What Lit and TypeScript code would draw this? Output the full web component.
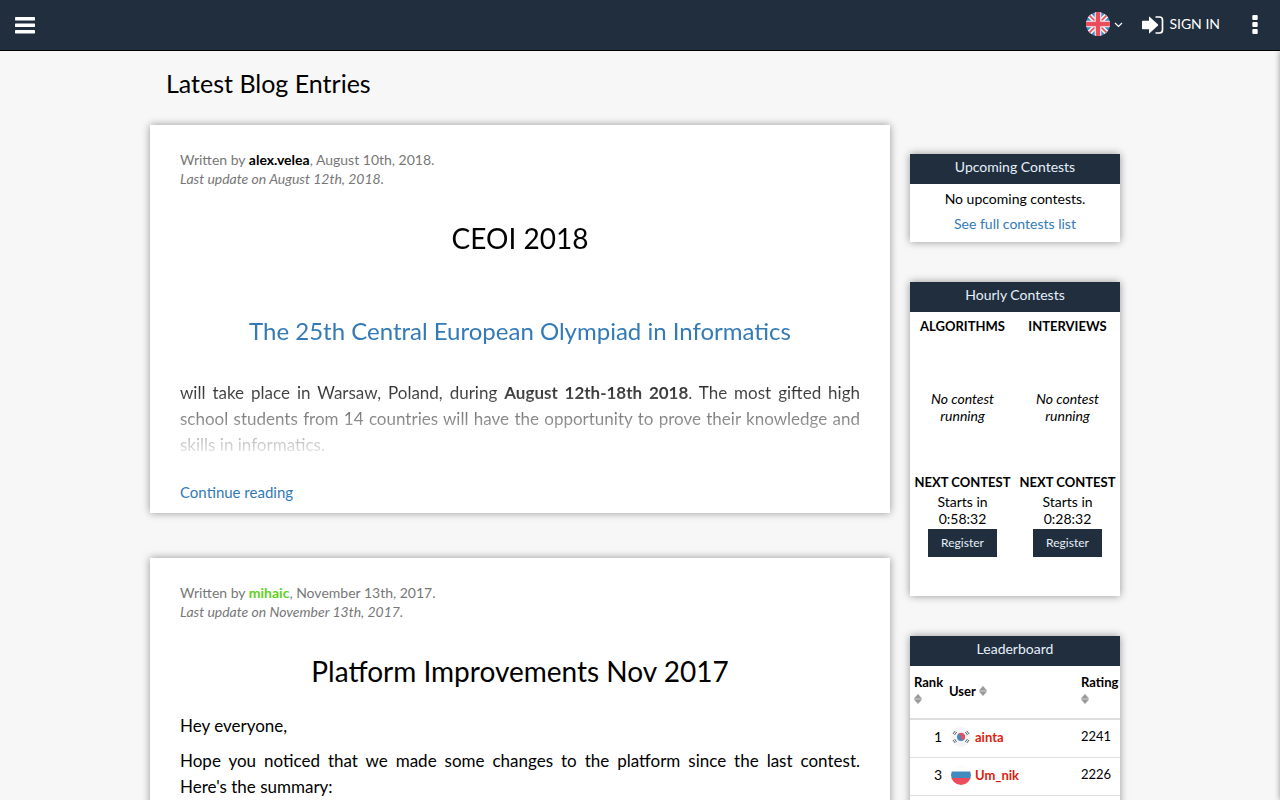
import { LitElement, html, css, svg } from "lit";
import { customElement } from "lit/decorators.js";

const ukFlag = svg`
  <svg class="flag-lg" viewBox="0 0 24 24" aria-hidden="true">
    <clipPath id="uk"><circle cx="12" cy="12" r="12"/></clipPath>
    <g clip-path="url(#uk)">
      <rect width="24" height="24" fill="#428bc1"/>
      <path d="M0 0L24 24M24 0L0 24" stroke="#f5f5f5" stroke-width="5"/>
      <path d="M0 0L24 24M24 0L0 24" stroke="#e8516a" stroke-width="1.8"/>
      <path d="M12 0V24M0 12H24" stroke="#f5f5f5" stroke-width="6.6"/>
      <path d="M12 0V24M0 12H24" stroke="#ed4c5c" stroke-width="4.4"/>
    </g>
  </svg>`;

const krFlag = svg`
  <svg class="flag" viewBox="0 0 20 20" aria-hidden="true">
    <circle cx="10" cy="10" r="10" fill="#f5f5f7"/>
    <circle cx="10" cy="10" r="4" fill="#428bc1"/>
    <path d="M6.300 8.500A4 4 0 1 1 13.700 11.500A2 2 0 0 1 10 10A2 2 0 0 0 6.300 8.500z" fill="#ed4c5c"/>
    <g stroke="#5f656b" stroke-width="1" fill="none">
      <path d="M2 7L4.200 4M3.500 8L5.700 5M15.800 4L18 7M14.300 5L16.500 8M2 13L4.200 16M3.500 12L5.700 15M15.800 16L18 13M14.300 15L16.500 12"/>
    </g>
  </svg>`;

const ruFlag = svg`
  <svg class="flag" viewBox="0 0 20 20" aria-hidden="true">
    <clipPath id="ru"><circle cx="10" cy="10" r="10"/></clipPath>
    <g clip-path="url(#ru)">
      <rect width="20" height="7" fill="#fcfcfc"/>
      <rect y="6.500" width="20" height="7" fill="#428bc1"/>
      <rect y="13" width="20" height="7" fill="#ed4c5c"/>
    </g>
  </svg>`;

const sortIcon = svg`
  <svg class="sort" viewBox="0 0 8 10" aria-hidden="true">
    <path d="M.3 4.400L4 .3 7.700 4.400zM.3 5.600H7.700L4 9.700z" fill="#999" stroke="#999" stroke-width=".5"/>
  </svg>`;

interface Player { rank: number; name: string; rating: number; flag: unknown; }
interface Contest { kind: string; countdown: string; }

const players: Player[] = [
  { rank: 1, name: "ainta", rating: 2241, flag: krFlag },
  { rank: 3, name: "Um_nik", rating: 2226, flag: ruFlag },
];

const contests: Contest[] = [
  { kind: "ALGORITHMS", countdown: "0:58:32" },
  { kind: "INTERVIEWS", countdown: "0:28:32" },
];

@customElement("app-root")
export class AppRoot extends LitElement {
  static styles = css`
    :host {
      display: block;
      min-height: 100vh;
      background: #f7f7f7;
      color: #000;
      font: 14px/20px Lato, "Liberation Sans", sans-serif;
    }
    * { box-sizing: border-box; }
    h1, h2, h3, h4, p { margin: 0; font-weight: 400; }
    a { color: #337ab7; text-decoration: none; }
    button { font-family: inherit; border: 0; cursor: pointer; }
    svg { display: block; }

    .topbar {
      position: sticky;
      top: 0;
      z-index: 2;
      display: flex;
      align-items: center;
      height: 51px;
      padding: 0 22px 3px 15px;
      background: #202e3e;
      border-bottom: 1px solid #000;
    }
    .icon-btn { background: none; padding: 0; color: #fff; }
    .menu-icon { width: 20px; height: 18px; margin-top: 2px; }
    .actions { display: flex; align-items: center; margin-left: auto; color: #fff; }
    .lang { display: flex; align-items: center; gap: 4px; margin-right: 19px; }
    .flag-lg { width: 24px; height: 24px; }
    .chevron { width: 9px; height: 6px; margin-top: 3px; }
    .signin { display: flex; align-items: center; gap: 5px; color: #fff; margin-right: 32px; }
    .signin-icon { width: 22px; height: 18px; margin-top: 3px; }
    .dots { width: 6px; height: 20px; }

    .drawer {
      position: fixed;
      top: 51px;
      bottom: 0;
      left: 100%;
      width: 250px;
      box-shadow: 0 0 6px rgba(0, 0, 0, 0.4);
    }

    .page { max-width: 980px; margin: 0 auto; padding-right: 10px; }
    .page-title { padding: 16px 16px 26px; font-size: 25px; line-height: 32px; }
    .columns { display: grid; grid-template-columns: minmax(0, 1fr) 210px; gap: 20px; align-items: start; }

    .posts { display: grid; gap: 45px; }
    .card { background: #fff; box-shadow: 0 0 8px rgba(0, 0, 0, 0.4); }
    .post { padding: 25px 30px 10px; }
    .meta { color: #777; line-height: 19px; }
    .author { font-weight: 700; color: #000; }
    .author.green { color: #5fd11c; }
    .post-title { margin: 34px 0 25px; font-size: 28px; line-height: 33px; text-align: center; }
    .post-sub { margin: 62px 0 35px; font-size: 24px; line-height: 28px; text-align: center; }
    .text { font-size: 17px; line-height: 26px; text-align: justify; }
    .text + .text { margin-top: 9px; }
    .excerpt {
      -webkit-mask-image: linear-gradient(#000 calc(100% - 88px), transparent calc(100% + 5px));
      mask-image: linear-gradient(#000 calc(100% - 88px), transparent calc(100% + 5px));
    }
    .more { display: block; width: fit-content; margin-top: 24px; font-size: 15px; line-height: 21px; }

    .side { display: grid; gap: 40px; padding-top: 29px; text-align: center; }
    .side-title { padding: 3px 0 7px; font-size: 14px; line-height: 20px; background: #202e3e; color: #e6f0fa; }
    .upcoming { display: grid; gap: 5px; padding: 5px 0 8px; }
    .hourly { display: grid; grid-template-columns: 1fr 1fr; padding: 4px 0 39px; }
    .label { font-size: 13px; font-weight: 700; line-height: 20px; }
    .status { padding: 54px 20px 48px; font-style: italic; line-height: 17px; }
    .starts { padding: 1px 20px 2px; line-height: 17px; }
    .register { display: block; width: 69px; height: 28px; margin: 0 auto; padding: 0 0 2px; font-size: 12px; background: #202e3e; color: #e6f0fa; }

    .board { width: 100%; border-collapse: collapse; table-layout: fixed; text-align: left; margin-bottom: 40px; }
    .board th { height: 53px; padding: 0 0 2px 4px; border-bottom: 2px solid #ddd; font-size: 13px; line-height: 17px; }
    .board td { height: 38px; padding: 0 0 2px 4px; border-bottom: 1px solid #ddd; }
    .col-rank { width: 35px; }
    .col-rating { width: 43px; }
    .board .num { padding: 0 3px 2px 0; text-align: right; }
    .board .rating { padding-bottom: 5px; font-size: 13px; }
    .sort { display: inline-block; width: 8px; height: 10px; }
    .player { display: flex; align-items: center; gap: 4px; padding-left: 2px; }
    .flag { width: 20px; height: 20px; }
    .handle { color: #dd1c0f; font-size: 13px; font-weight: 700; }
  `;

  private renderContest(c: Contest) {
    return html`
      <section>
        <h4 class="label">${c.kind}</h4>
        <p class="status">No contest running</p>
        <h4 class="label">NEXT CONTEST</h4>
        <p class="starts">Starts in ${c.countdown}</p>
        <button class="register">Register</button>
      </section>`;
  }

  private renderPlayer(p: Player) {
    return html`
      <tr>
        <td class="num">${p.rank}</td>
        <td><span class="player">${p.flag}<a class="handle" href="#">${p.name}</a></span></td>
        <td class="rating">${p.rating}</td>
      </tr>`;
  }

  render() {
    return html`
      <header class="topbar">
        <button class="icon-btn" aria-label="Menu">
          <svg class="menu-icon" viewBox="0 0 20 18" fill="#fff" aria-hidden="true">
            <rect y="1" width="20" height="3.400" rx=".6"/>
            <rect y="7.500" width="20" height="3.400" rx=".6"/>
            <rect y="14" width="20" height="3.400" rx=".6"/>
          </svg>
        </button>
        <div class="actions">
          <button class="icon-btn lang" aria-label="Language">
            ${ukFlag}
            <svg class="chevron" viewBox="0 0 9 6" aria-hidden="true">
              <path d="M1 1l3.500 3.500L8 1" fill="none" stroke="#fff" stroke-width="1.200"/>
            </svg>
          </button>
          <a class="signin" href="#">
            <svg class="signin-icon" viewBox="0 0 22 18" aria-hidden="true">
              <path d="M.8 4.800H7V1.200q0-1 .8-.3l8 7.400q.7.700 0 1.400l-8 7.400q-.8.700-.8-.3v-3.600H.8q-.8 0-.8-.8V5.600q0-.8.800-.8z" fill="#fff"/>
              <path d="M13.500 1h4q3 0 3 3v10q0 3-3 3h-4" fill="none" stroke="#fff" stroke-width="1.700"/>
            </svg>
            <span>SIGN IN</span>
          </a>
          <button class="icon-btn" aria-label="More">
            <svg class="dots" viewBox="0 0 6 20" fill="#fff" aria-hidden="true">
              <rect x=".3" y="1" width="5.400" height="5" rx="1"/>
              <rect x=".3" y="8" width="5.400" height="5" rx="1"/>
              <rect x=".3" y="15" width="5.400" height="5" rx="1"/>
            </svg>
          </button>
        </div>
      </header>
      <div class="drawer"></div>

      <main class="page">
        <h1 class="page-title">Latest Blog Entries</h1>
        <div class="columns">
          <div class="posts">
            <article class="card post">
              <p class="meta">Written by <a class="author" href="#">alex.velea</a>, August 10th, 2018.</p>
              <p class="meta"><em>Last update on August 12th, 2018.</em></p>
              <div class="excerpt">
                <h2 class="post-title">CEOI 2018</h2>
                <h3 class="post-sub"><a href="#">The 25th Central European Olympiad in Informatics</a></h3>
                <p class="text">will take place in Warsaw, Poland, during <b>August 12th-18th 2018</b>. The most gifted high school students from 14 countries will have the opportunity to prove their knowledge and skills in informatics.</p>
              </div>
              <a class="more" href="#">Continue reading</a>
            </article>
            <article class="card post">
              <p class="meta">Written by <a class="author green" href="#">mihaic</a>, November 13th, 2017.</p>
              <p class="meta"><em>Last update on November 13th, 2017.</em></p>
              <h2 class="post-title">Platform Improvements Nov 2017</h2>
              <p class="text">Hey everyone,</p>
              <p class="text">Hope you noticed that we made some changes to the platform since the last contest. Here's the summary:</p>
            </article>
          </div>

          <aside class="side">
            <section class="card">
              <h3 class="side-title">Upcoming Contests</h3>
              <div class="upcoming">
                <p>No upcoming contests.</p>
                <a href="#">See full contests list</a>
              </div>
            </section>
            <section class="card">
              <h3 class="side-title">Hourly Contests</h3>
              <div class="hourly">${contests.map((c) => this.renderContest(c))}</div>
            </section>
            <section class="card">
              <h3 class="side-title">Leaderboard</h3>
              <table class="board">
                <thead>
                  <tr>
                    <th class="col-rank">Rank ${sortIcon}</th>
                    <th>User ${sortIcon}</th>
                    <th class="col-rating">Rating ${sortIcon}</th>
                  </tr>
                </thead>
                <tbody>${players.map((p) => this.renderPlayer(p))}</tbody>
              </table>
            </section>
          </aside>
        </div>
      </main>`;
  }
}
